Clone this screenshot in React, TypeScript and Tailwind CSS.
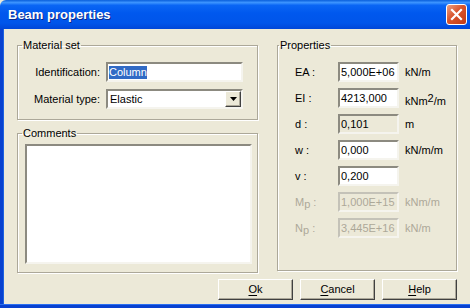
import React from "react";

const sunken =
  "border-2 border-t-[#8c8a80] border-l-[#8c8a80] border-r-[#f5f4ee] border-b-[#f5f4ee]";
const raised =
  "border border-t-white border-l-white border-r-[#404040] border-b-[#404040] shadow-[inset_-1px_-1px_0_#aca899]";
const etched =
  "border border-[#aca899] shadow-[1px_1px_0_white,inset_1px_1px_0_white] rounded-none";

function TitleBar() {
  return (
    <div className="h-[29px] flex items-center justify-between pl-[8px] pr-[3px] rounded-tl-[6px] bg-[linear-gradient(to_bottom,#0a5fdb_0%,#3d95ff_9%,#0a66f4_18%,#0058ee_45%,#0055ea_80%,#0046d8_100%)]">
      <span className="text-white font-bold text-[13px] [text-shadow:1px_1px_0_#0c2b8a]">
        Beam properties
      </span>
      <div className="w-[21px] h-[21px] rounded-[3px] border border-white flex items-center justify-center bg-[linear-gradient(135deg,#eaa083_0%,#d8542c_45%,#c13b16_100%)]">
        <svg width="13" height="13" viewBox="0 0 13 13">
          <path d="M2 2 L11 11 M11 2 L2 11" stroke="white" strokeWidth="2.2" strokeLinecap="square" />
        </svg>
      </div>
    </div>
  );
}

function Field({ value, disabled, readOnly }: { value: string; disabled?: boolean; readOnly?: boolean }) {
  const bg = disabled || readOnly ? "bg-[#ece9d8]" : "bg-white";
  const col = disabled ? "text-[#aca899]" : "text-black";
  const brd = disabled
    ? "border-2 border-t-[#c4c2b8] border-l-[#c4c2b8] border-r-[#f5f4ee] border-b-[#f5f4ee]"
    : sunken;
  return (
    <div className={`w-[61px] h-[20px] ${bg} ${col} ${brd} flex items-center pl-[1px] leading-none`}>
      {value}
    </div>
  );
}

type Row = {
  label: React.ReactNode;
  value: string;
  unit: React.ReactNode;
  disabled?: boolean;
  readOnly?: boolean;
};

const rows: Row[] = [
  { label: "EA :", value: "5,000E+06", unit: "kN/m" },
  {
    label: "EI :",
    value: "4213,000",
    unit: (
      <span className="relative top-[3px]">
        kNm<sup className="text-[11px] relative -top-[3px]">2</sup>/m
      </span>
    ),
  },
  { label: "d :", value: "0,101", unit: "m", readOnly: true },
  { label: "w :", value: "0,000", unit: "kN/m/m" },
  { label: "v :", value: "0,200", unit: "" },
  {
    label: (
      <span>
        M<sub className="text-[11px] relative top-[2px]">p</sub> :
      </span>
    ),
    value: "1,000E+15",
    unit: "kNm/m",
    disabled: true,
  },
  {
    label: (
      <span>
        N<sub className="text-[11px] relative top-[2px]">p</sub> :
      </span>
    ),
    value: "3,445E+16",
    unit: "kN/m",
    disabled: true,
  },
];

function Btn({ k, rest }: { k: string; rest: string }) {
  return (
    <div className={`w-[75px] h-[21px] bg-[#ece9d8] ${raised} flex items-center justify-center`}>
      <span>
        <span className="underline underline-offset-2">{k}</span>
        {rest}
      </span>
    </div>
  );
}

export default function App() {
  return (
    <div className="w-[470px] h-[308px] overflow-hidden flex flex-col bg-[#ece9d8] font-['Liberation_Sans',Arial,sans-serif] text-[11px] text-black">
      <TitleBar />
      <div className="flex flex-1 min-h-0">
        <div className="w-[4px] bg-[#0841d0] border-r border-r-[#1d62e0]" />
        <div className="flex-1 flex flex-col pl-[13px] pr-[13px] pt-[10px]">
          <div className="flex gap-[19px]">
            <div className="w-[241px] flex flex-col gap-[7px]">
              <fieldset className={`${etched} h-[81px] pt-[10px]`}>
                <legend className="ml-[4px] px-[1px] leading-[13px]">Material set</legend>
                <div className="flex flex-col gap-[7px]">
                  <div className="flex items-center">
                    <span className="w-[82px] text-right">Identification:</span>
                    <div className={`ml-[6px] w-[137px] h-[20px] bg-white ${sunken} flex items-center pl-[1px]`}>
                      <span className="bg-[#316ac5] text-white leading-[13px]">Column</span>
                    </div>
                  </div>
                  <div className="flex items-center">
                    <span className="w-[82px] text-right">Material type:</span>
                    <div className={`ml-[6px] w-[137px] h-[20px] bg-white ${sunken} flex items-center justify-between pl-[2px]`}>
                      <span>Elastic</span>
                      <div className={`w-[16px] h-[16px] bg-[#ece9d8] ${raised} flex items-center justify-center`}>
                        <svg width="7" height="4" viewBox="0 0 7 4">
                          <path d="M0 0 H7 L3.5 4 Z" fill="black" />
                        </svg>
                      </div>
                    </div>
                  </div>
                </div>
              </fieldset>
              <fieldset className={`${etched} h-[146px] pt-[4px]`}>
                <legend className="ml-[4px] px-[1px] leading-[13px]">Comments</legend>
                <div className={`ml-[7px] w-[227px] h-[120px] bg-white ${sunken}`} />
              </fieldset>
            </div>
            <fieldset className={`${etched} w-[180px] h-[232px] pt-[10px]`}>
              <legend className="ml-[1px] px-[1px] leading-[13px]">Properties</legend>
              <div className="flex flex-col gap-[6px] pl-[17px]">
                {rows.map((r, i) => (
                  <div key={i} className={`flex items-center h-[20px] ${r.disabled ? "text-[#aca899]" : ""}`}>
                    <span className="w-[43px]">{r.label}</span>
                    <Field value={r.value} disabled={r.disabled} readOnly={r.readOnly} />
                    <span className="ml-[6px]">{r.unit}</span>
                  </div>
                ))}
              </div>
            </fieldset>
          </div>
          <div className="flex justify-end gap-[7px] mt-[6px]">
            <Btn k="O" rest="k" />
            <Btn k="C" rest="ancel" />
            <Btn k="H" rest="elp" />
          </div>
        </div>
      </div>
      <div className="h-[4px] bg-[#0841d0] border-t border-t-[#2a6ef0]" />
    </div>
  );
}
